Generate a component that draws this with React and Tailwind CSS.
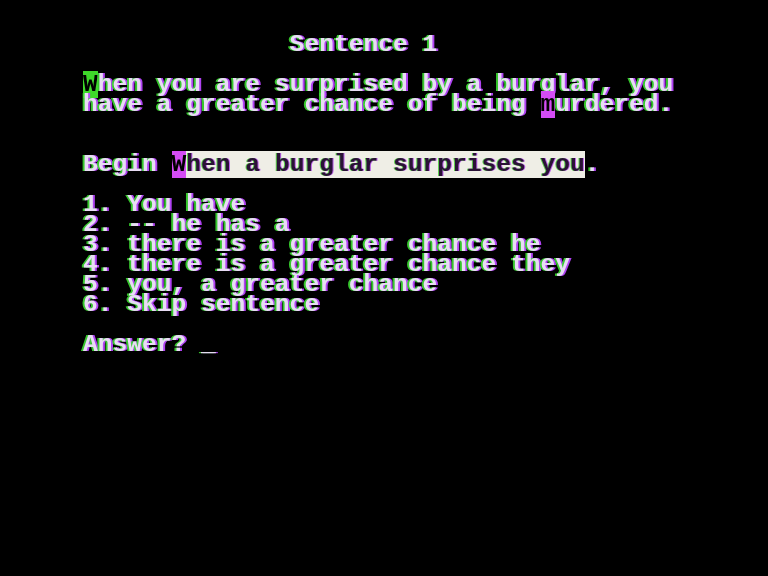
import React from "react";

// Apple II 40x24 text screen, one <div> per row
const fringe =
  "[text-shadow:-2px_0_rgba(60,220,50,0.9),2px_0_rgba(185,70,255,0.95)]";

function Inv({ ch, bg }) {
  return <span className={`${bg} text-black [text-shadow:none]`}>{ch}</span>;
}

const rows = [
  [],
  ["              Sentence 1"],
  [],
  [<Inv key="w" ch="W" bg="bg-[#3ed82a]" />, "hen you are surprised by a burglar, you"],
  ["have a greater chance of being ", <Inv key="m" ch="m" bg="bg-[#d44cf4]" />, "urdered."],
  [],
  [],
  [
    "Begin ",
    <span key="hl" className="bg-[#efeee6] text-[#2a1236] [text-shadow:-1px_0_rgba(60,200,40,0.8),1px_0_rgba(170,60,230,0.8)]">
      <Inv ch="W" bg="bg-[#d44cf4]" />
      hen a burglar surprises you
    </span>,
    ".",
  ],
  [],
  ["1. You have"],
  ["2. -- he has a"],
  ["3. there is a greater chance he"],
  ["4. there is a greater chance they"],
  ["5. you, a greater chance"],
  ["6. Skip sentence"],
  [],
  ["Answer? _"],
];

export default function App() {
  return (
    <div className="w-[768px] h-[576px] bg-black overflow-hidden">
      <div
        className={`pt-[15px] pl-[83px] font-['Liberation_Mono',monospace] font-bold text-[24.6px] leading-[20px] text-[#e8dcf4] ${fringe} blur-[0.4px]`}
      >
        {rows.map((r, i) => (
          <div key={i} className="h-[20px] whitespace-pre">
            {r}
          </div>
        ))}
      </div>
    </div>
  );
}
